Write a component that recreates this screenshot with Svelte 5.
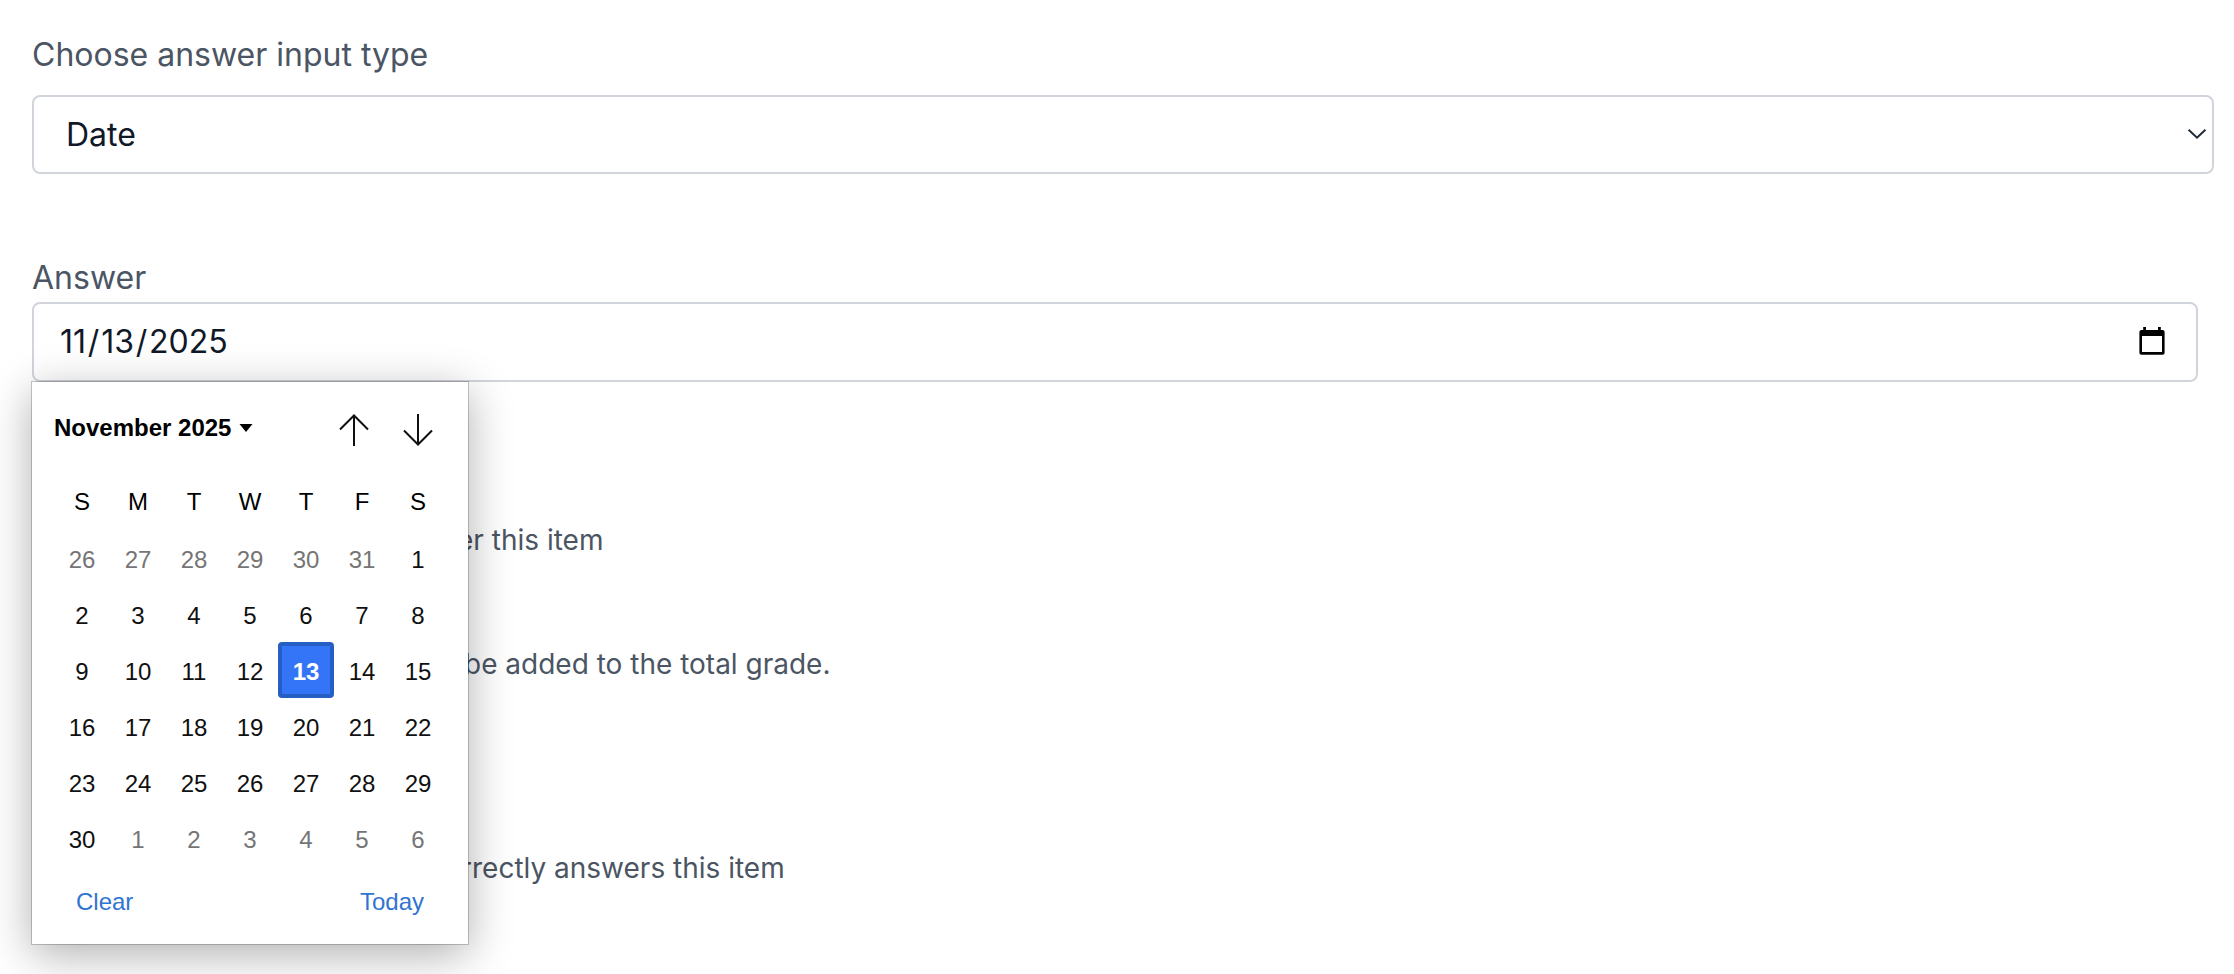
<script>
  const weekdays = ['S', 'M', 'T', 'W', 'T', 'F', 'S'];
  const days = [
    ...[26, 27, 28, 29, 30, 31].map((n) => ({ n, outside: true })),
    ...Array.from({ length: 30 }, (_, i) => ({ n: i + 1, outside: false })),
    ...[1, 2, 3, 4, 5, 6].map((n) => ({ n, outside: true }))
  ];
  let selected = $state(13);
</script>

<main>
  <div class="label first">Choose answer input type</div>
  <div class="field select">
    <span>Date</span>
    <svg class="chevron" width="20" height="12" viewBox="0 0 20 12">
      <path d="M1.6 1.7 10 9.7 18.4 1.7" fill="none" stroke="#1f2937" stroke-width="2" />
    </svg>
  </div>

  <div class="label second">Answer</div>
  <div class="anchor">
    <div class="field date">
      <span class="value"><span>11</span><span>/</span><span>13</span><span>/</span><span>2025</span></span>
      <svg class="calendar" width="26" height="28" viewBox="0 0 26 28">
        <path fill="#000" fill-rule="evenodd" d="M4.200 0h2.800v3h12V0h2.800v3h1.700A2 2 0 0 1 25.600 5v20.700A2 2 0 0 1 23.600 27.700h-21.200A2 2 0 0 1 .4 25.700V5A2 2 0 0 1 2.400 3H4.200ZM3 9v16h20V9Z" />
      </svg>
    </div>

    <div class="popup">
      <div class="head">
        <span class="month">November 2025</span>
        <svg class="caret" width="14" height="8" viewBox="0 0 14 8"><path d="M0.500 0h13L7 8Z" /></svg>
        <svg class="arrow" width="30" height="32" viewBox="0 0 30 32">
          <path d="M15 32V1.500M1 15.500 15 1.500 29 15.500" />
        </svg>
        <svg class="arrow" width="30" height="32" viewBox="0 0 30 32">
          <path d="M15 0V30.500M1 16.500 15 30.500 29 16.500" />
        </svg>
      </div>
      <div class="grid week">
        {#each weekdays as d}<span>{d}</span>{/each}
      </div>
      <div class="grid">
        {#each days as d}
          <button
            class:outside={d.outside}
            class:selected={!d.outside && d.n === selected}
            onclick={() => { if (!d.outside) selected = d.n; }}>{d.n}</button>
        {/each}
      </div>
      <div class="actions"><span>Clear</span><span>Today</span></div>
    </div>
  </div>

  <p class="help one">er this item</p>
  <p class="help two">be added to the total grade.</p>
  <p class="help three">rrectly answers this item</p>
</main>

<style>
  :global(body) { background: #fff; }
  main {
    box-sizing: border-box;
    height: 974px;
    padding: 31px 20px 0 32px;
    overflow: hidden;
    font-family: Inter, sans-serif;
    color: #4b5563;
  }
  .label { font-size: 32px; line-height: 48px; }
  .first { margin-bottom: 16px; }
  .second { margin-top: 80px; }
  .field {
    box-sizing: border-box;
    display: flex;
    align-items: center;
    justify-content: space-between;
    height: 79px;
    border: 2px solid #d1d5db;
    border-radius: 8px;
    background: #fff;
    color: #111827;
    font-size: 32px;
    line-height: 48px;
  }
  .select { padding: 0 5px 0 32px; }
  .chevron { margin-top: -1px; }
  .date { height: 80px; width: 2166px; padding: 0 31px 0 26px; }
  .value { display: flex; gap: 1.8px; }
  .calendar { margin-top: -2px; }
  .anchor { position: relative; }
  .popup {
    position: absolute;
    z-index: 2;
    top: 80px;
    left: 0;
    box-sizing: border-box;
    width: 436px;
    height: 562px;
    padding: 24px 22px 0;
    background: #fff;
    box-shadow: 0 0 0 1px rgba(0, 0, 0, 0.2), 0 10px 42px rgba(0, 0, 0, 0.32);
    font-family: "Liberation Sans", Arial, sans-serif;
    font-size: 24px;
    color: #101010;
  }
  .head { display: flex; align-items: center; height: 48px; padding-right: 13px; }
  .month { padding-bottom: 5px; font-weight: 700; color: #000; }
  .caret { margin: 0 auto 4px 8px; }
  .arrow { fill: none; stroke: #101010; stroke-width: 2; }
  .arrow + .arrow { margin-left: 34px; }
  .grid { display: grid; grid-template-columns: repeat(7, 56px); grid-auto-rows: 56px; }
  .grid span, .grid button { display: flex; align-items: center; justify-content: center; }
  .week { margin-top: 20px; color: #000; }
  .grid button {
    box-sizing: border-box;
    padding: 3px 0 0;
    border: 4px solid transparent;
    border-radius: 4px;
    background: none;
    font: inherit;
    color: #101010;
  }
  .grid button.outside { color: #757575; }
  .grid button.selected { border-color: #265fc4; background: #3474f6; color: #fff; font-weight: 700; }
  .actions { display: flex; justify-content: space-between; padding: 22px 22px 0; line-height: 28px; color: #3174d1; }
  .help { margin: 0; font-size: 28px; line-height: 40px; white-space: nowrap; }
  .one { margin-top: 138px; padding-left: 425px; }
  .two { margin-top: 84px; padding-left: 432px; }
  .three { margin-top: 164px; padding-left: 429px; }
</style>
